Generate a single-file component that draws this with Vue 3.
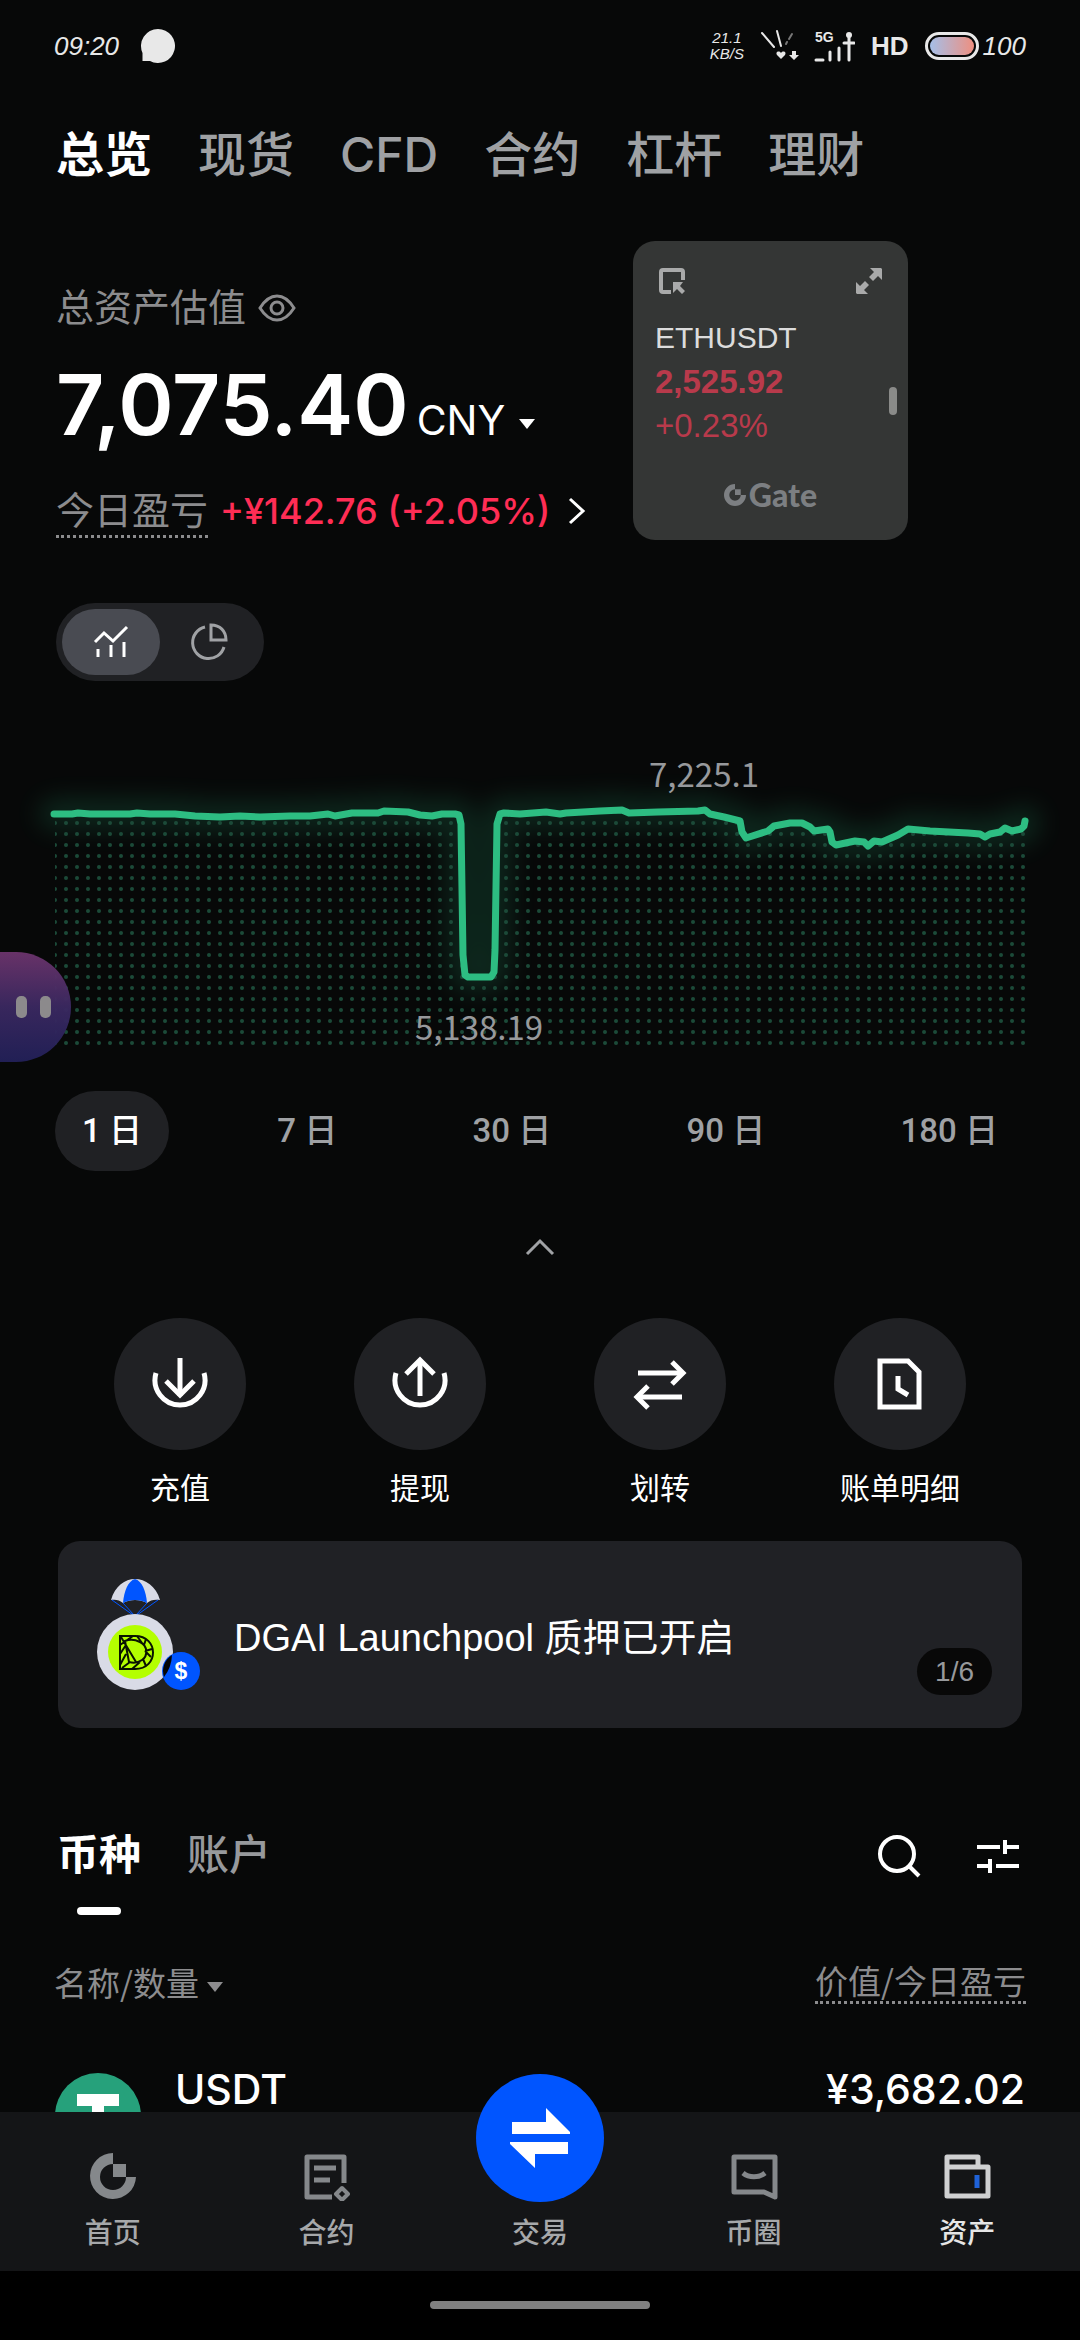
<template>
  <div class="page">
    <main class="content">
      <!-- 状态栏 -->
      <div class="status">
        <span class="time">09:20</span>
        <svg class="bubble" viewBox="0 0 36 36" width="36" height="36">
          <path d="M18 1a17 17 0 1 1-8 32H2.500V25A17 17 0 0 1 18 1z" fill="#e8e8e8" />
        </svg>
        <div class="status-right">
          <div class="speed"><span>21.1</span><span>KB/S</span></div>
          <svg class="wifi" viewBox="0 0 40 34" width="40" height="34">
            <g fill="none" stroke="#e8e8e8" stroke-width="2" stroke-linecap="round">
              <path d="M2 4l12 14" />
              <path d="M17 2l4 15" />
              <path d="M32 5l-3 5M27 13l-1 2" stroke="#777" />
            </g>
            <path d="M21 30l-4-4c-2-3 2-5 4-2 2-3 6-1 4 2z" fill="#e8e8e8" />
            <path d="M32 22h4v4h3l-5 5-5-5h3z" fill="#e8e8e8" />
          </svg>
          <svg class="signal" viewBox="0 0 42 34" width="42" height="34">
            <text x="2" y="13" font-size="14" font-weight="700" fill="#e8e8e8">5G</text>
            <g stroke="#e8e8e8" stroke-width="3" stroke-linecap="round">
              <path d="M3 31h7M17 23v8M26 19v12M36 6v25M31 14h10" />
            </g>
            <circle cx="36" cy="6" r="3" fill="#e8e8e8" />
          </svg>
          <span class="hd">HD</span>
          <span class="battery"><i></i></span>
          <span class="power">100</span>
        </div>
      </div>

      <nav class="tabs">
        <button
          v-for="(item, index) in tabs"
          :key="item"
          :class="{ active: tab === index }"
          @click="tab = index"
        >
          {{ item }}
        </button>
      </nav>

      <section class="summary">
        <div class="label">
          <span>总资产估值</span>
          <button class="icon-btn" aria-label="隐藏资产" @click="hidden = !hidden">
            <svg viewBox="0 0 38 28" width="38" height="28" fill="none" stroke="#8c8c8e" stroke-width="3">
              <path d="M2 14C7 6 12 2 19 2s12 4 17 12c-5 8-10 12-17 12S7 22 2 14z" />
              <circle cx="19" cy="14" r="6" />
            </svg>
          </button>
        </div>
        <div class="total">
          <strong>{{ hidden ? '******' : '7,075.40' }}</strong>
          <button class="currency">CNY<i class="caret"></i></button>
        </div>
        <div class="pnl">
          <span class="dotted">今日盈亏</span>
          <a href="#pnl">
            +¥142.76 (+2.05%)
            <svg viewBox="0 0 18 28" width="18" height="28" fill="none" stroke="#fff" stroke-width="3">
              <path d="M2 2l13 12L2 26" />
            </svg>
          </a>
        </div>
        <div class="toggle">
          <button :class="{ active: view === 'line' }" aria-label="走势" @click="view = 'line'">
            <svg viewBox="0 0 36 34" width="36" height="34" fill="none" stroke="#fff" stroke-width="3">
              <path d="M2 17l9-9 9 8L34 2M5 24v8M18 20v12M31 17v15" />
            </svg>
          </button>
          <button :class="{ active: view === 'pie' }" aria-label="分布" @click="view = 'pie'">
            <svg viewBox="0 0 38 38" width="38" height="38" fill="none" stroke="#a0a2a5" stroke-width="3">
              <path d="M15 4a16 16 0 1 0 19 20" />
              <path d="M21 2c9 0 15 6 15 15H21z" />
            </svg>
          </button>
        </div>
      </section>

      <!-- 资产走势图 -->
      <svg class="chart" viewBox="0 0 1080 310">
        <defs>
          <pattern id="dots" x="-5" y="0" width="11" height="11" patternUnits="userSpaceOnUse">
            <circle cx="5" cy="6" r="2" fill="#1b4a38" />
          </pattern>
          <filter id="glow" x="-10%" y="-40%" width="120%" height="180%">
            <feGaussianBlur stdDeviation="12" />
          </filter>
        </defs>
        <path :d="linePath" class="glow" filter="url(#glow)" />
        <path :d="areaPath" fill="url(#dots)" />
        <path :d="linePath" class="line" />
        <text x="704" y="47" text-anchor="middle">7,225.1</text>
        <text x="479" y="300" text-anchor="middle">5,138.19</text>
      </svg>

      <div class="ranges">
        <button
          v-for="item in ranges"
          :key="item"
          :class="{ active: range === item }"
          @click="range = item"
        >
          {{ item }} 日
        </button>
      </div>

      <button class="collapse" aria-label="收起">
        <svg viewBox="0 0 30 18" width="30" height="18" fill="none" stroke="#a0a2a5" stroke-width="3">
          <path d="M2 16L15 3l13 13" />
        </svg>
      </button>

      <div class="actions">
        <button v-for="item in actions" :key="item.text">
          <span class="round">
            <svg viewBox="0 0 60 60" width="60" height="60" fill="none" stroke="#fff" stroke-width="5">
              <path v-for="d in item.paths" :key="d" :d="d" />
            </svg>
          </span>
          {{ item.text }}
        </button>
      </div>

      <a class="banner" href="#launchpool">
        <svg viewBox="0 0 104 112" width="104" height="112">
          <path d="M15 21C19 7 29 0 39 0s21 7 25 21c-5-1-10 0-13 3-7-4-17-4-24 0-3-3-8-4-12-3z" fill="#d9dbe6" />
          <path d="M39 0c7 2 11 12 12 24-7-4-17-4-24 0C28 12 32 2 39 0z" fill="#0055ff" />
          <path d="M16 21l21 15M27 24l11 12M51 24L40 36M62 21L41 36" stroke="#0055ff" stroke-width="1" fill="none" />
          <circle cx="39" cy="73" r="38" fill="#d9dbe6" />
          <circle cx="39" cy="73" r="27" fill="#b4ff00" />
          <g fill="none" stroke="#0a1400" stroke-width="2">
            <path d="M24 57h15c24 0 24 33 0 33H24z" />
            <path d="M29 62c5-2 11-1 15 1 8 4 8 14 2 18-4 3-9 3-13 2zM25 58l15 25M24 66l13-9M24 75l6-9M24 86l6-11M26 89l8-6M36 90l8-7M50 87l-3-7M55 78l-6-6M56 70l-7 2M50 60l-2 6M41 57l5 7" />
          </g>
          <circle cx="85" cy="92" r="19" fill="#0055ff" />
          <path d="M76 76a38 38 0 0 1-8 22 19 19 0 0 1 8-22z" fill="#050505" />
          <text x="85" y="100" text-anchor="middle" font-size="23" font-weight="700" fill="#fff">$</text>
        </svg>
        <span class="banner-text">DGAI Launchpool 质押已开启</span>
        <span class="count">1/6</span>
      </a>

      <div class="list-head">
        <button
          v-for="(item, index) in lists"
          :key="item"
          :class="['list-tab', { active: list === index }]"
          @click="list = index"
        >
          {{ item }}
        </button>
        <button class="icon-btn search" aria-label="搜索">
          <svg viewBox="0 0 44 44" width="44" height="44" fill="none" stroke="#fff" stroke-width="4">
            <circle cx="20" cy="20" r="17" />
            <path d="M32 32l10 10" />
          </svg>
        </button>
        <button class="icon-btn" aria-label="筛选">
          <svg viewBox="0 0 42 34" width="42" height="34" fill="none" stroke="#fff" stroke-width="4">
            <path d="M0 8h23M28 1v14M28 8h14M0 27h13M13 20v14M19 27h23" />
          </svg>
        </button>
      </div>

      <div class="columns">
        <button>名称/数量<i class="caret"></i></button>
        <span class="dotted">价值/今日盈亏</span>
      </div>

      <div class="coin">
        <svg viewBox="0 0 86 86" width="86" height="86">
          <circle cx="43" cy="43" r="43" fill="#26a17b" />
          <path d="M22 21h42v12H49v7c12 1 21 3 21 6s-9 5-21 6v18H37V52c-12-1-21-3-21-6s9-5 21-6v-7H22z" fill="#fff" />
        </svg>
        <span>USDT</span>
        <span class="worth">¥3,682.02</span>
      </div>

      <!-- 悬浮行情卡片 -->
      <aside class="ticker">
        <div class="ticker-top">
          <svg viewBox="0 0 26 26" width="26" height="26">
            <path d="M12 24H4a2 2 0 0 1-2-2V4a2 2 0 0 1 2-2h18a2 2 0 0 1 2 2v8" fill="none" stroke="#a9aaaa" stroke-width="4" />
            <path d="M14 14h10l-3 4 5 5-3 3-5-5-4 4z" fill="#a9aaaa" />
          </svg>
          <svg viewBox="0 0 26 26" width="26" height="26" fill="#a9aaaa">
            <path d="M14 0h11l1 1v11l-4-4-5 5-4-4 5-5z" />
            <path d="M12 26H1l-1-1V14l4 4 5-5 4 4-5 5z" />
          </svg>
        </div>
        <span class="pair">ETHUSDT</span>
        <strong>2,525.92</strong>
        <span class="rate">+0.23%</span>
        <div class="brand">
          <svg viewBox="0 0 46 46" width="22" height="22" fill="currentColor">
            <path d="M23 0v11a12 12 0 1 0 12 12h11A23 23 0 1 1 23 0z" />
            <path d="M23 11h12v12H23z" />
          </svg>
          Gate
        </div>
        <i class="grip"></i>
      </aside>

      <button class="helper" aria-label="助手"><i></i><i></i></button>
    </main>

    <nav class="bottom">
      <a v-for="item in menus" :key="item.text" :href="'#' + item.id" :class="{ active: item.id === 'assets' }">
        <svg v-if="item.id === 'home'" viewBox="0 0 48 48" width="48" height="48" fill="#85888b">
          <path d="M24 0v11a13 13 0 1 0 13 13h10A23 23 0 1 1 24 0z" />
          <path d="M24 11h13v13H24z" />
        </svg>
        <svg v-else-if="item.id === 'futures'" viewBox="0 0 48 48" width="48" height="48" fill="none" stroke="#85888b" stroke-width="5">
          <path d="M30 44H5V4h37v26M12 15h22M12 27h16" stroke-linejoin="round" />
          <path d="M40 35l6 6-6 6-6-6z" stroke-width="4" stroke-linejoin="round" />
        </svg>
        <span v-else-if="item.id === 'trade'" class="trade">
          <svg viewBox="0 0 62 64" width="62" height="64" fill="#fff">
            <path d="M3 16h34V2l24 24v2H3z" />
            <path d="M59 48H26v14L1 38v-2h58z" />
          </svg>
        </span>
        <svg v-else-if="item.id === 'moments'" viewBox="0 0 48 48" width="48" height="48" fill="none" stroke="#85888b" stroke-width="5" stroke-linejoin="round">
          <path d="M4 4h41v40l-11-5H4z" />
          <path d="M13 20c6 5 16 5 22 0" />
        </svg>
        <svg v-else viewBox="0 0 48 48" width="48" height="48" fill="none" stroke="#cfd0d1" stroke-width="5" stroke-linejoin="round">
          <path d="M4 14V4h31v10M4 14h41v29H4z" />
          <path d="M34 22v13" stroke="#1f62d8" />
        </svg>
        <span class="menu-text">{{ item.text }}</span>
      </a>
    </nav>
    <div class="home-bar"><i></i></div>
  </div>
</template>

<script setup>
import { ref, computed } from 'vue'

const tabs = ['总览', '现货', 'CFD', '合约', '杠杆', '理财']
const tab = ref(0)
const hidden = ref(false)
const view = ref('line')
const ranges = [1, 7, 30, 90, 180]
const range = ref(1)
const lists = ['币种', '账户']
const list = ref(0)

const actions = [
  { text: '充值', paths: ['M30 4v38', 'M16 27l14 14 14-14', 'M6 19a25 25 0 1 0 48 0'] },
  { text: '提现', paths: ['M30 42V6', 'M16 20L30 6l14 14', 'M6 19a25 25 0 1 0 48 0'] },
  { text: '划转', paths: ['M8 19h43', 'M42 8l11 11-11 11', 'M52 43H9', 'M18 32L7 43l11 11'] },
  { text: '账单明细', paths: ['M10 7h28l11 11v35H10z', 'M28 22v13l10 6'] }
]

const menus = [
  { id: 'home', text: '首页' },
  { id: 'futures', text: '合约' },
  { id: 'trade', text: '交易' },
  { id: 'moments', text: '币圈' },
  { id: 'assets', text: '资产' }
]

// 折线坐标点
const points = [
  [54, 74], [72, 74], [78, 73], [90, 74], [130, 74], [137, 73], [150, 74], [175, 74], [195, 76],
  [220, 77], [240, 76], [260, 77], [290, 76], [310, 76], [328, 74], [335, 76], [352, 73], [378, 73],
  [384, 71], [408, 72], [420, 75], [432, 76], [442, 74], [455, 74], [459, 75], [461, 84], [463, 215],
  [465, 235], [468, 237], [491, 237], [494, 232], [495, 210], [497, 84], [500, 74], [504, 73],
  [520, 74], [546, 72], [560, 74], [566, 73], [600, 71], [622, 70], [629, 73], [658, 72], [698, 71],
  [705, 70], [710, 74], [724, 77], [740, 81], [742, 92], [746, 98], [768, 91], [774, 86], [790, 83],
  [802, 83], [810, 87], [814, 91], [828, 89], [830, 92], [832, 102], [836, 105], [855, 101],
  [864, 102], [868, 106], [874, 101], [882, 102], [898, 95], [908, 89], [930, 91], [968, 93],
  [980, 94], [985, 97], [990, 94], [1000, 92], [1005, 88], [1012, 91], [1021, 89], [1024, 86],
  [1025, 81]
]
const linePath = computed(() => 'M' + points.map((p) => p.join(' ')).join('L'))
// 折线下方的点阵区域
const areaPath = computed(() => `${linePath.value}V306H55V74z`)
</script>

<style>
body {
  margin: 0;
  background: #070808;
}
</style>

<style scoped>
.page {
  display: flex;
  flex-direction: column;
  height: 100vh;
  color: #fff;
  background: #070808;
  font-family: 'Liberation Sans', 'Noto Sans CJK SC', sans-serif;
}
.content {
  position: relative;
  flex: 1;
  min-height: 0;
  overflow-y: auto;
  scrollbar-width: none;
}
button {
  padding: 0;
  border: 0;
  color: inherit;
  background: none;
  font: inherit;
}
a {
  color: inherit;
  text-decoration: none;
}
svg {
  display: block;
  flex: none;
}

.status {
  display: flex;
  align-items: center;
  height: 92px;
  padding: 0 54px;
  color: #e8e8e8;
}
.time,
.power,
.hd {
  font-size: 26px;
}
.time,
.power,
.speed {
  font-style: italic;
}
.bubble {
  margin-left: 21px;
}
.status-right {
  display: flex;
  align-items: center;
  margin-left: auto;
}
.speed {
  display: flex;
  flex-direction: column;
  align-items: center;
  font-size: 15px;
  line-height: 16px;
}
.wifi {
  margin-left: 16px;
}
.signal {
  margin-left: 13px;
}
.hd {
  margin-left: 16px;
  font-weight: 700;
}
.battery {
  box-sizing: border-box;
  width: 54px;
  height: 28px;
  margin: 0 4px 0 16px;
  padding: 2px;
  border: 3px solid #e8e8e8;
  border-radius: 14px;
}
.battery i {
  display: block;
  height: 100%;
  border-radius: 10px;
  background: linear-gradient(90deg, #a5bfe8, #ee8f80);
}

.tabs {
  display: flex;
  gap: 46px;
  margin-top: 32px;
  padding: 0 56px;
  color: #9fa1a4;
  font-family: Inter, 'Noto Sans CJK SC', sans-serif;
  font-size: 48px;
  font-weight: 500;
  line-height: 62px;
}
.tabs .active {
  color: #fff;
  font-weight: 700;
}

.summary {
  padding: 0 56px;
}
.label {
  display: flex;
  align-items: center;
  gap: 12px;
  margin-top: 98px;
  color: #8c8c8e;
  font-size: 38px;
  line-height: 48px;
}
.total {
  display: flex;
  align-items: baseline;
  gap: 8px;
  height: 96px;
  margin-top: 25px;
  line-height: 96px;
}
.total strong {
  font-family: Inter, sans-serif;
  font-size: 84px;
  font-weight: 600;
}
.currency {
  font-family: Inter, sans-serif;
  font-size: 41px;
}
.caret {
  display: inline-block;
  margin-left: 14px;
  border: 8px solid transparent;
  border-top: 10px solid currentColor;
  border-bottom: 0;
  vertical-align: middle;
}
.dotted {
  border-bottom: 3px dotted #8c8c8e;
}
.pnl {
  display: flex;
  align-items: flex-start;
  gap: 12px;
  margin-top: 34px;
  color: #8c8c8e;
  font-size: 38px;
  line-height: 48px;
}
.pnl a {
  display: flex;
  align-items: center;
  gap: 18px;
  color: #ff2d55;
  font-family: Inter, sans-serif;
  font-size: 36px;
  font-weight: 500;
}
.toggle {
  display: inline-flex;
  margin-top: 65px;
  padding: 6px;
  border-radius: 39px;
  background: #202124;
}
.toggle button {
  display: flex;
  align-items: center;
  justify-content: center;
  width: 98px;
  height: 66px;
  border-radius: 33px;
}
.toggle .active {
  background: #494b52;
}

.chart {
  width: 100%;
  margin-top: 59px;
  overflow: visible;
}
.chart text {
  fill: #97999c;
  font-family: 'Noto Sans CJK SC', sans-serif;
  font-size: 33px;
}
.line,
.glow {
  fill: none;
  stroke: #2dbd82;
  stroke-width: 7;
  stroke-linecap: round;
  stroke-linejoin: round;
}
.glow {
  stroke-width: 30;
  opacity: 0.17;
}

.ranges {
  display: flex;
  justify-content: space-between;
  margin-top: 41px;
  padding: 0 55px;
  color: #9fa1a4;
  font-family: Roboto, 'Noto Sans CJK SC', sans-serif;
  font-size: 33px;
  font-weight: 500;
  line-height: 80px;
}
.ranges button {
  padding: 0 27px;
  border-radius: 40px;
}
.ranges .active {
  color: #fff;
  background: #202124;
}
.collapse {
  display: block;
  margin: 67px auto 0;
}

.actions {
  display: grid;
  grid-template-columns: repeat(4, 1fr);
  margin-top: 62px;
  padding: 0 60px;
  font-size: 30px;
  line-height: 44px;
}
.actions button {
  display: flex;
  flex-direction: column;
  align-items: center;
  gap: 17px;
}
.round {
  display: flex;
  align-items: center;
  justify-content: center;
  width: 132px;
  height: 132px;
  border-radius: 50%;
  background: #202124;
}

.banner {
  position: relative;
  display: flex;
  align-items: center;
  gap: 34px;
  height: 187px;
  margin: 30px 58px 0;
  padding-left: 38px;
  border-radius: 22px;
  background: #202125;
  font-size: 38px;
}
.count {
  position: absolute;
  right: 30px;
  bottom: 33px;
  padding: 0 18px;
  border-radius: 24px;
  color: #97999c;
  background: #080808;
  font-size: 28px;
  line-height: 47px;
}

.list-head {
  display: flex;
  align-items: center;
  height: 60px;
  margin-top: 98px;
  padding: 0 61px 0 57px;
  font-size: 42px;
  font-weight: 500;
}
.list-tab {
  position: relative;
  margin-right: 46px;
  color: #97999c;
  line-height: 60px;
}
.list-tab.active {
  color: #fff;
  font-weight: 700;
}
.list-tab.active::after {
  content: '';
  position: absolute;
  left: 50%;
  bottom: -29px;
  width: 44px;
  height: 8px;
  border-radius: 4px;
  background: #fff;
  transform: translateX(-50%);
}
.search {
  margin: 0 56px 0 auto;
}

.columns {
  display: flex;
  justify-content: space-between;
  margin-top: 73px;
  padding: 0 54px;
  color: #8c8c8e;
  font-family: 'Noto Sans CJK SC', sans-serif;
  font-size: 33px;
  line-height: 42px;
}
.columns .caret {
  margin-left: 8px;
}

.coin {
  display: flex;
  align-items: flex-start;
  gap: 34px;
  margin-top: 69px;
  padding: 0 55px;
  font-family: Inter, sans-serif;
  font-size: 41px;
  font-weight: 500;
  line-height: 32px;
}
.worth {
  margin-left: auto;
}

.ticker {
  position: absolute;
  top: 241px;
  left: 633px;
  box-sizing: border-box;
  display: flex;
  flex-direction: column;
  width: 275px;
  height: 299px;
  padding: 27px 22px 0;
  border-radius: 22px;
  color: #b83a4b;
  background: #343635;
  font-size: 33px;
  line-height: 44px;
}
.ticker-top {
  display: flex;
  justify-content: space-between;
  margin-bottom: 22px;
  padding: 0 4px;
}
.pair {
  color: #dcdcdc;
  font-size: 30px;
}
.brand {
  display: flex;
  align-items: center;
  justify-content: center;
  gap: 3px;
  margin-top: 25px;
  color: #7c7f82;
  font-family: Lato, sans-serif;
  font-size: 32px;
  font-weight: 900;
}
.grip {
  position: absolute;
  top: 146px;
  right: 11px;
  width: 8px;
  height: 28px;
  border-radius: 4px;
  background: #8a8b89;
}
.helper {
  position: absolute;
  top: 952px;
  left: 0;
  display: flex;
  align-items: center;
  gap: 13px;
  width: 71px;
  height: 110px;
  padding-left: 16px;
  border-radius: 0 55px 55px 0;
  background: linear-gradient(rgba(108, 52, 108, 0.96), rgba(58, 40, 96, 0.96) 50%, rgba(34, 32, 88, 0.96));
}
.helper i {
  width: 11px;
  height: 22px;
  border-radius: 5px;
  background: #8c8a8c;
}

.bottom {
  display: grid;
  grid-template-columns: repeat(5, 1fr);
  height: 159px;
  padding: 0 6px;
  color: #a6a8aa;
  background: #141517;
  z-index: 1;
}
.bottom a {
  position: relative;
  display: flex;
  flex-direction: column;
  align-items: center;
  justify-content: flex-end;
  gap: 13px;
  padding-bottom: 17px;
}
.bottom .active {
  color: #e6e6e6;
}
.menu-text {
  font-size: 28px;
  font-weight: 500;
  line-height: 40px;
}
.trade {
  position: absolute;
  top: -38px;
  display: flex;
  align-items: center;
  justify-content: center;
  width: 128px;
  height: 128px;
  border-radius: 50%;
  background: #0055ff;
}
.home-bar {
  display: flex;
  justify-content: center;
  height: 39px;
  padding-top: 30px;
  background: #000;
}
.home-bar i {
  width: 220px;
  height: 8px;
  border-radius: 4px;
  background: #808080;
}
</style>
